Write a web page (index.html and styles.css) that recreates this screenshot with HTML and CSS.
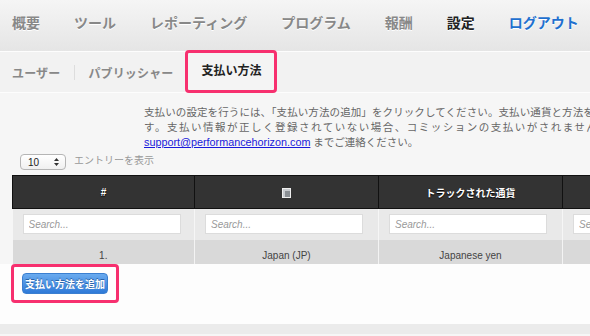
FILE: index.html
```html
<!DOCTYPE html>
<html lang="ja">
<head>
  <meta charset="UTF-8" />
  <title>支払い方法</title>
  <link rel="stylesheet" href="styles.css">
</head>
<body>
  <div class="topnav">
    <a href="#">概要</a>
    <a href="#">ツール</a>
    <a href="#">レポーティング</a>
    <a href="#">プログラム</a>
    <a href="#">報酬</a>
    <a href="#" class="current">設定</a>
    <a href="#" class="logout">ログアウト</a>
  </div>

  <div class="subnav">
    <a href="#">ユーザー</a>
    <span class="sep"></span>
    <a href="#">パブリッシャー</a>
    <a href="#" class="active">支払い方法</a>
  </div>

  <div class="content">
    <p class="intro">
      <span class="line1">支払いの設定を行うには、「支払い方法の追加」をクリックしてください。支払い通貨と方法を確認してくださいま</span><br>
      <span class="line2">す。支払い情報が正しく登録されていない場合、コミッションの支払いがされませんのでご注意ください。</span><br>
      <span class="line3"><a href="#">support@performancehorizon.com</a> までご連絡ください。</span>
    </p>

    <div class="length">
      <div class="select">
        <span>10</span>
        <svg class="arrows" width="5" height="8" viewBox="0 0 5 8">
          <path d="M2.5 0 L5 3 L0 3 Z M2.5 8 L5 5 L0 5 Z" fill="#333"/>
        </svg>
      </div>
      <span class="label">エントリーを表示</span>
    </div>

    <div class="table-wrap">
      <table>
        <thead>
          <tr class="head">
            <th class="col-num">#</th>
            <th><span class="flag-icon"></span></th>
            <th>トラックされた通貨</th>
            <th></th>
          </tr>
          <tr class="filters">
            <td><input type="text" placeholder="Search..."></td>
            <td><input type="text" placeholder="Search..."></td>
            <td><input type="text" placeholder="Search..."></td>
            <td><input type="text" placeholder="Search..."></td>
          </tr>
        </thead>
        <tbody>
          <tr>
            <td>1.</td>
            <td>Japan (JP)</td>
            <td>Japanese yen</td>
            <td></td>
          </tr>
        </tbody>
      </table>
    </div>
  </div>

  <div class="actions">
    <div class="highlight">
      <button class="btn">支払い方法を追加</button>
    </div>
  </div>
  <div class="bottom"></div>
</body>
</html>
```

FILE: styles.css
```css
:root {
  --pink: #f7306f;
  --muted: #888;
  --dark: #222;
  --blue: #1f70cf;
}

body {
  margin: 0;
  background: #f6f6f6;
  font-family: "Liberation Sans", "Noto Sans CJK JP", sans-serif;
  overflow: hidden;
  width: 590px;
  height: 336px;
}

a {
  text-decoration: none;
}

.topnav {
  height: 52px;
  display: flex;
  align-items: center;
  gap: 34px;
  padding: 0 0 0 12px;
  background: linear-gradient(#f5f5f5, #e5e5e5);
  border-bottom: 1px solid #fdfdfd;
  box-sizing: border-box;
}

.topnav a {
  font-size: 14px;
  font-weight: bold;
  color: var(--muted);
  white-space: nowrap;
  text-shadow: 0 1px 0 #fff;
  margin-top: -7px;
}

.topnav a.current {
  color: var(--dark);
}

.topnav a.logout {
  color: var(--blue);
}

.subnav {
  height: 40px;
  display: flex;
  align-items: center;
  padding-left: 12px;
  background: #f2f2f2;
  border-bottom: 1px solid #fdfdfd;
}

.subnav a {
  font-size: 12px;
  font-weight: bold;
  color: var(--muted);
  white-space: nowrap;
  letter-spacing: 0.15px;
}

.subnav .sep {
  width: 1px;
  height: 15px;
  background: #ddd;
  margin: 0 13px 0 14px;
}

.subnav a.active {
  color: var(--dark);
  letter-spacing: 0;
  margin-left: 12px;
  margin-top: -2px;
  padding: 0 13px;
  height: 37px;
  line-height: 37px;
  border: 3px solid var(--pink);
  border-radius: 4px;
  background: #f4f4f4;
}

.content {
  padding-top: 12px;
}

.intro {
  margin: 0 0 0 144px;
  font-size: 10.5px;
  line-height: 15px;
  color: #666;
  white-space: nowrap;
}

.intro .line1 {
  letter-spacing: 0.1px;
}

.intro .line2 {
  letter-spacing: 1.5px;
}

.intro a {
  color: #1a1adb;
  text-decoration: underline;
  font-size: 10.8px;
}

.length {
  display: flex;
  align-items: center;
  margin: 4px 0 0 20px;
  height: 16px;
}

.select {
  width: 46px;
  height: 16px;
  box-sizing: border-box;
  border: 1px solid #b5b5b5;
  border-radius: 4px;
  background: linear-gradient(#fff, #f0f0f0);
  display: flex;
  align-items: center;
  justify-content: space-between;
  padding: 0 6px 0 7px;
  font-size: 10px;
  color: #222;
}

.length .label {
  margin-left: 8px;
  font-size: 10px;
  color: #999;
  margin-top: -5px;
}

.table-wrap {
  margin: 5px 0 0 12px;
  width: 760px;
}

table {
  border-collapse: collapse;
  table-layout: fixed;
  width: 734px;
}

table th,
table td {
  width: 184px;
  text-align: center;
  font-size: 10px;
  box-sizing: border-box;
}

table .col-num {
  width: 182px;
}

tr.head th {
  height: 33px;
  background: #333;
  color: #fff;
  font-weight: bold;
  text-shadow: 0 1px 1px #000;
  border: 1px solid #111;
  border-left: 1px solid #555;
}

tr.head th:first-child {
  border-left: 1px solid #111;
}

.flag-icon {
  display: inline-block;
  width: 7px;
  height: 8px;
  border: 1px solid #eee;
  background: #8a8f94;
  box-shadow: inset 2px 2px 0 #c9ccd0;
  vertical-align: middle;
}

tr.filters td {
  height: 31px;
  background: #e9e9e9;
  padding: 0 10px;
  border-left: 1px solid #f6f6f6;
}

tr.filters input {
  width: 158px;
  height: 20px;
  box-sizing: border-box;
  border: 1px solid #dcdcdc;
  background: #fff;
  font-family: "Liberation Sans", sans-serif;
  font-size: 10px;
  font-style: italic;
  padding: 0 5px;
  display: block;
}

tr.filters input::placeholder {
  color: #999;
}

tbody td {
  height: 31px;
  background: #d9d9d9;
  color: #444;
  border-left: 1px solid #f3f3f3;
}

tr.filters td:first-child,
tbody td:first-child {
  border-left: none;
}

.actions {
  background: #fdfdfd;
  height: 60px;
}

.highlight {
  width: fit-content;
  margin: -7px 0 0 11px;
  padding: 6px 8px;
  border: 3px solid var(--pink);
  border-radius: 4px;
  background: #fff;
}

.btn {
  display: block;
  width: 86px;
  height: 21px;
  border: 1px solid #3b7fd0;
  border-radius: 4px;
  background: linear-gradient(#6aabef, #2f7ad8);
  color: #fff;
  font-family: "Liberation Sans", "Noto Sans CJK JP", sans-serif;
  font-size: 10px;
  font-weight: bold;
  text-shadow: 0 -1px 0 #2a62a8;
  padding: 0;
}

.bottom {
  height: 10px;
  background: #ebebeb;
}
```
